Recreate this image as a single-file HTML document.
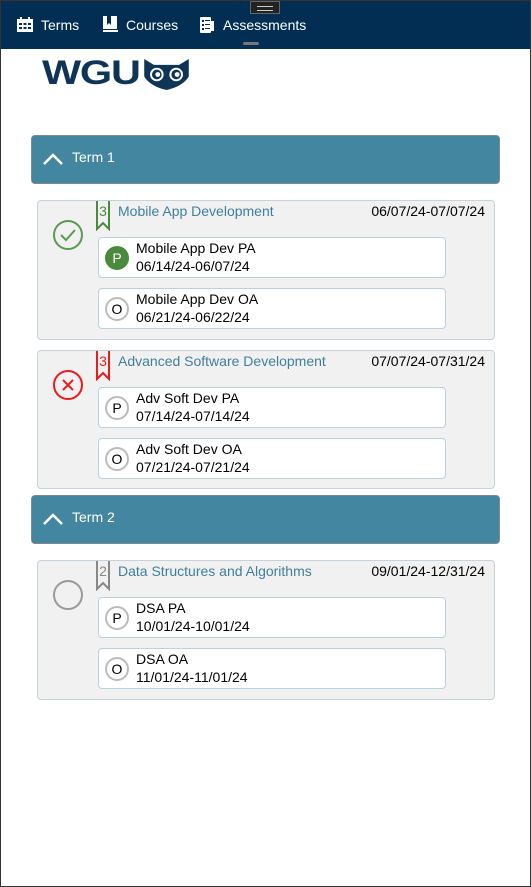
<!DOCTYPE html>
<html><head><meta charset="utf-8"><style>
*{box-sizing:border-box;margin:0;padding:0}
body{width:531px;height:887px;background:#fff;font-family:"Liberation Sans","DejaVu Sans",sans-serif;position:relative;overflow:hidden;}
.frame{position:absolute;left:0;top:0;width:531px;height:887px;border:1px solid #333;pointer-events:none;z-index:5}
.nav{position:absolute;left:0;top:0;width:531px;height:49px;background:#012e52;color:#fff;font-size:14px}
.nav span{position:absolute;top:17px}
.handle{position:absolute;left:250px;top:1px;width:30px;height:13px;background:#222;border:1px solid #666}
.handle:after{content:"";position:absolute;left:6px;top:4px;width:16px;height:3px;border-top:1px solid #ccc;border-bottom:1px solid #ccc}
.ul{position:absolute;left:243px;top:42px;width:16px;height:3px;background:#777;border-radius:2px}
.logo{position:absolute;left:42px;top:54px;font-weight:900;font-size:34px;color:#0f3556;letter-spacing:-1px;transform:scaleX(1.22);transform-origin:left top;font-family:"Liberation Sans",sans-serif}
.term{position:absolute;left:31px;width:469px;height:49px;background:#43869f;border:1px solid #7b8a90;border-radius:4px;color:#fff;font-size:14px}
.term span{position:absolute;left:40px;top:13px}
.term svg{position:absolute;left:11px;top:17px}
.card{position:absolute;left:37px;width:458px;height:140px;background:#f1f1f1;border:1px solid #c5d3da;border-radius:4px}
.title{position:absolute;left:80px;top:2px;color:#3f7f9c;font-size:14px}
.dates{position:absolute;right:9px;top:2px;font-size:14px;color:#000}
.bm{position:absolute;left:58px;top:0}
.item{position:absolute;left:60px;width:348px;height:41px;background:#fff;border:1px solid #b9d2dd;border-radius:4px;font-size:14px;line-height:18px;color:#000}
.item .t{position:absolute;left:37px;top:1px}
.circ{position:absolute;left:6px;top:8px;width:24px;height:24px;border-radius:50%;border:2px solid #bbb;text-align:center;line-height:20px;font-size:14px}
.circ.g{background:#4a8a3c;border-color:#4a8a3c;color:#fff}
.status{position:absolute;left:14px;top:18px}
</style></head><body>
<div class="frame"></div>
<div class="nav">
<svg style="position:absolute;left:17px;top:17px" width="16" height="15" viewBox="0 0 16 15"><rect x="0" y="2" width="16" height="13" fill="#fff"/><rect x="3" y="0" width="2" height="3" fill="#fff"/><rect x="11" y="0" width="2" height="3" fill="#fff"/><g fill="#012e52"><rect x="2" y="6" width="3" height="2"/><rect x="6.5" y="6" width="3" height="2"/><rect x="11" y="6" width="3" height="2"/><rect x="2" y="10" width="3" height="2"/><rect x="6.5" y="10" width="3" height="2"/><rect x="11" y="10" width="3" height="2"/></g></svg>
<span style="left:41px">Terms</span>
<svg style="position:absolute;left:102px;top:16px" width="16" height="16" viewBox="0 0 16 16"><path d="M1 0h4v9l2-2 2 2V0h6v13H1z" fill="#fff"/><rect x="1" y="14" width="15" height="2" fill="#fff"/></svg>
<span style="left:126px">Courses</span>
<svg style="position:absolute;left:200px;top:16px" width="14" height="17" viewBox="0 0 14 17"><rect x="0" y="1" width="11" height="16" rx="1" fill="#fff"/><rect x="11" y="5" width="3" height="10" fill="#fff"/><g fill="#012e52"><rect x="2" y="4" width="2" height="2"/><rect x="5" y="4" width="5" height="1"/><rect x="2" y="8" width="2" height="2"/><rect x="5" y="8" width="5" height="1"/><rect x="2" y="12" width="2" height="2"/><rect x="5" y="12" width="5" height="1"/></g></svg>
<span style="left:223px">Assessments</span>
<div class="handle"></div><div class="ul"></div>
</div>
<div class="logo">WGU</div>
<svg style="position:absolute;left:144px;top:59px" width="45" height="31" viewBox="0 0 46 32"><path d="M0 0 L10 6 H36 L46 0 V18 Q40 28 23 32 Q6 28 0 18Z" fill="#0f3556"/><circle cx="13" cy="16" r="7" fill="#fff"/><circle cx="13" cy="16" r="5" fill="#0f3556"/><circle cx="14" cy="16" r="2.5" fill="#fff"/><circle cx="33" cy="16" r="7" fill="#fff"/><circle cx="33" cy="16" r="5" fill="#0f3556"/><circle cx="34" cy="16" r="2.5" fill="#fff"/></svg>

<div class="term" style="top:135px"><svg width="20" height="12" viewBox="0 0 20 12"><path d="M1 11 L10 2 L19 11" stroke="#fff" stroke-width="2.5" fill="none"/></svg><span>Term 1</span></div>

<div class="card" style="top:200px">
<svg class="status" width="32" height="32" viewBox="0 0 32 32"><circle cx="16" cy="16" r="14" fill="none" stroke="#5a9a50" stroke-width="2"/><path d="M9 16 L14 21 L23 11" fill="none" stroke="#5a9a50" stroke-width="2"/></svg>
<svg class="bm" width="14" height="30" viewBox="0 0 14 30"><path d="M1 0V28L7 22L13 28V0" fill="none" stroke="#4a8a3c" stroke-width="2"/><text x="7" y="15" text-anchor="middle" font-size="14" fill="#4a8a3c" font-family="Liberation Sans">3</text></svg>
<div class="title">Mobile App Development</div><div class="dates">06/07/24-07/07/24</div>
<div class="item" style="top:36px"><div class="circ g">P</div><div class="t">Mobile App Dev PA<br>06/14/24-06/07/24</div></div>
<div class="item" style="top:87px"><div class="circ">O</div><div class="t">Mobile App Dev OA<br>06/21/24-06/22/24</div></div>
</div>

<div class="card" style="top:350px;height:139px">
<svg class="status" width="32" height="32" viewBox="0 0 32 32"><circle cx="16" cy="16" r="14" fill="none" stroke="#e81c1c" stroke-width="2"/><path d="M11 11 L21 21 M21 11 L11 21" stroke="#e81c1c" stroke-width="2"/></svg>
<svg class="bm" width="14" height="30" viewBox="0 0 14 30"><path d="M1 0V28L7 22L13 28V0" fill="none" stroke="#e81c1c" stroke-width="2"/><text x="7" y="15" text-anchor="middle" font-size="14" fill="#e81c1c" font-family="Liberation Sans">3</text></svg>
<div class="title">Advanced Software Development</div><div class="dates">07/07/24-07/31/24</div>
<div class="item" style="top:36px"><div class="circ">P</div><div class="t">Adv Soft Dev PA<br>07/14/24-07/14/24</div></div>
<div class="item" style="top:87px"><div class="circ">O</div><div class="t">Adv Soft Dev OA<br>07/21/24-07/21/24</div></div>
</div>

<div class="term" style="top:495px"><svg width="20" height="12" viewBox="0 0 20 12"><path d="M1 11 L10 2 L19 11" stroke="#fff" stroke-width="2.5" fill="none"/></svg><span>Term 2</span></div>

<div class="card" style="top:560px">
<svg class="status" width="32" height="32" viewBox="0 0 32 32"><circle cx="16" cy="16" r="14" fill="none" stroke="#999" stroke-width="2"/></svg>
<svg class="bm" width="14" height="30" viewBox="0 0 14 30"><path d="M1 0V28L7 22L13 28V0" fill="none" stroke="#888" stroke-width="2"/><text x="7" y="15" text-anchor="middle" font-size="14" fill="#888" font-family="Liberation Sans">2</text></svg>
<div class="title">Data Structures and Algorithms</div><div class="dates">09/01/24-12/31/24</div>
<div class="item" style="top:36px"><div class="circ">P</div><div class="t">DSA PA<br>10/01/24-10/01/24</div></div>
<div class="item" style="top:87px"><div class="circ">O</div><div class="t">DSA OA<br>11/01/24-11/01/24</div></div>
</div>
</body></html>
